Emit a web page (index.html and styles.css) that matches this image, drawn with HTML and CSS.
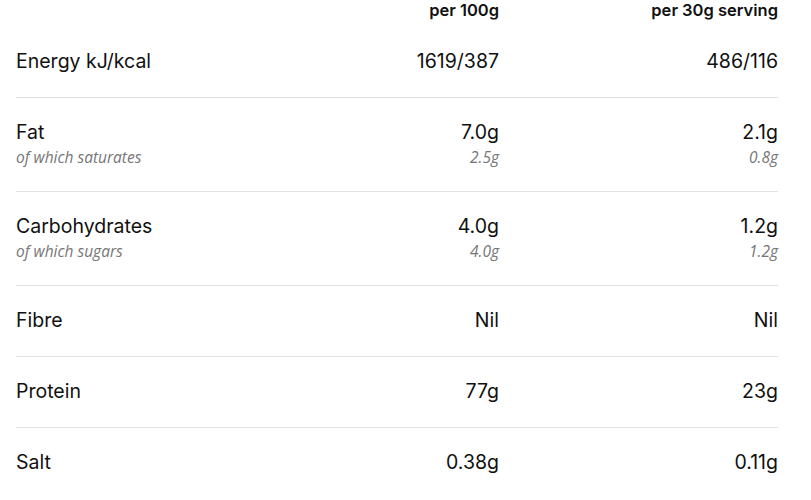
FILE: index.html
```html
<!DOCTYPE html>
<html>
<head>
<meta charset="utf-8">
<link rel="stylesheet" href="styles.css">
</head>
<body>
<div class="table">
  <div class="head">
    <div class="label"></div>
    <div class="val">per 100g</div>
    <div class="val">per 30g serving</div>
  </div>
  <div class="row">
    <div class="label">Energy kJ/kcal</div>
    <div class="val">1619/387</div>
    <div class="val">486/116</div>
  </div>
  <div class="row">
    <div class="label">Fat<div class="sub">of which saturates</div></div>
    <div class="val">7.0g<div class="sub">2.5g</div></div>
    <div class="val">2.1g<div class="sub">0.8g</div></div>
  </div>
  <div class="row">
    <div class="label">Carbohydrates<div class="sub">of which sugars</div></div>
    <div class="val">4.0g<div class="sub">4.0g</div></div>
    <div class="val">1.2g<div class="sub">1.2g</div></div>
  </div>
  <div class="row">
    <div class="label">Fibre</div>
    <div class="val">Nil</div>
    <div class="val">Nil</div>
  </div>
  <div class="row">
    <div class="label">Protein</div>
    <div class="val">77g</div>
    <div class="val">23g</div>
  </div>
  <div class="row last">
    <div class="label">Salt</div>
    <div class="val">0.38g</div>
    <div class="val">0.11g</div>
  </div>
</div>
</body>
</html>
```
FILE: styles.css
```css
html, body { margin: 0; padding: 0; background: #fff; }
body { font-family: Inter, "Liberation Sans", sans-serif; color: #111; }
.table { margin: 0 33px 0 16px; }
.head, .row { display: grid; grid-template-columns: 1fr 200px 279px; }
.head { height: 27px; font-size: 16.5px; font-weight: 600; line-height: 21px; }
.head .val { text-align: right; }
.row { padding: 23px 0 25px; border-bottom: 1px solid #e2e2e2; font-size: 19.5px; line-height: 22px; }
.row.last { border-bottom: none; }
.val { text-align: right; }
.sub { font-family: "Open Sans", sans-serif; font-size: 15.5px; font-style: italic; font-weight: 400; color: #767676; line-height: 20px; margin-top: 4px; margin-bottom: -1px; }
```
